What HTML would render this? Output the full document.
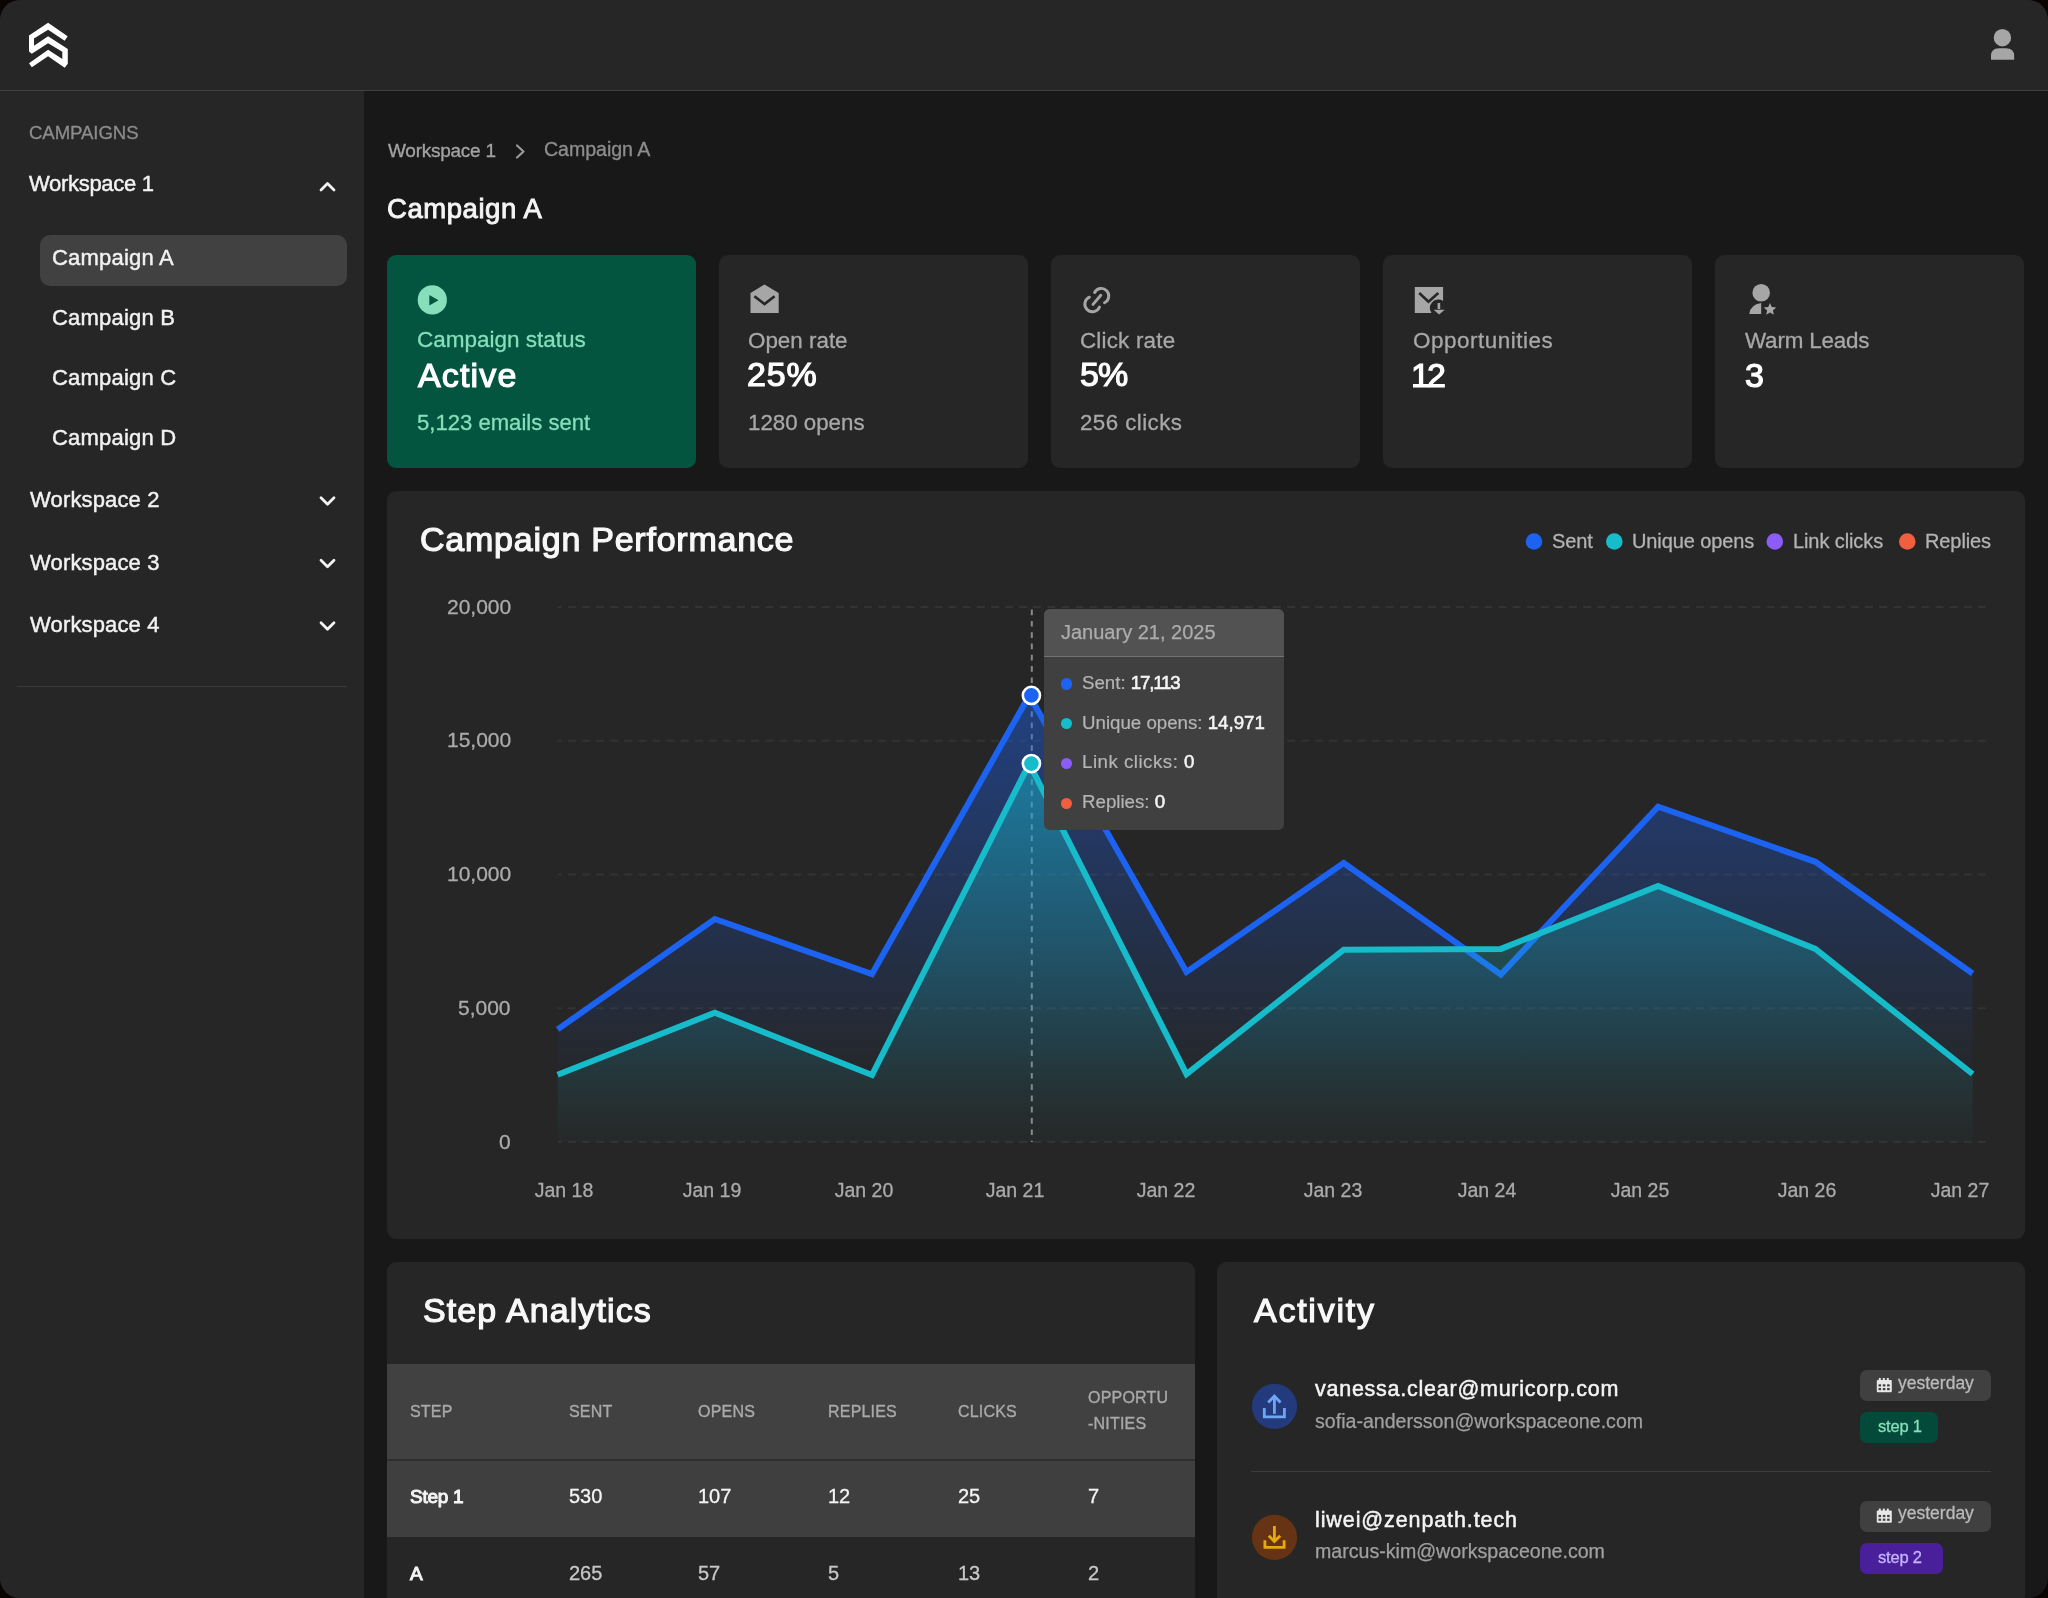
<!DOCTYPE html>
<html><head><meta charset="utf-8"><style>
html,body{margin:0;padding:0;background:#000;width:2048px;height:1598px;overflow:hidden}
body{position:relative;font-family:"Liberation Sans", sans-serif}
.t{position:absolute;white-space:nowrap;line-height:1;font-family:"Liberation Sans", sans-serif;will-change:transform}
.t b{font-weight:700}
svg{position:absolute;left:0;top:0}
</style></head><body>
<div style="position:absolute;left:0px;top:0px;width:2048px;height:1598px;background:#0a0403;border-radius:0px;"></div>
<div style="position:absolute;left:0;top:0;width:2048px;height:1598px;border-radius:20px;overflow:hidden;background:#181818">
<div style="position:absolute;left:0px;top:0px;width:2048px;height:90px;background:#262626;border-radius:0px;"></div>
<div style="position:absolute;left:0px;top:89.5px;width:2048px;height:1.6px;background:#404040;border-radius:0px;"></div>
<div style="position:absolute;left:0px;top:91px;width:364px;height:1507px;background:#262626;border-radius:0px;"></div>
</div>
<div class="t" style="left:29.30px;top:123.76px;font-size:18.6px;color:#8c8c8c;letter-spacing:-0.08px;-webkit-text-stroke:0.3px #8c8c8c;">CAMPAIGNS</div>
<div class="t" style="left:29.30px;top:173.38px;font-size:22px;color:#f2f2f2;letter-spacing:-0.3px;-webkit-text-stroke:0.45px #f2f2f2;">Workspace 1</div>
<div style="position:absolute;left:40px;top:234.5px;width:307px;height:51.5px;background:#414141;border-radius:10px;"></div>
<div class="t" style="left:52.00px;top:247.38px;font-size:22px;color:#f2f2f2;letter-spacing:0.2px;-webkit-text-stroke:0.45px #f2f2f2;">Campaign A</div>
<div class="t" style="left:52.00px;top:307.48px;font-size:22px;color:#f2f2f2;letter-spacing:0.2px;-webkit-text-stroke:0.45px #f2f2f2;">Campaign B</div>
<div class="t" style="left:52.00px;top:367.18px;font-size:22px;color:#f2f2f2;letter-spacing:0.2px;-webkit-text-stroke:0.45px #f2f2f2;">Campaign C</div>
<div class="t" style="left:52.00px;top:426.68px;font-size:22px;color:#f2f2f2;letter-spacing:0.2px;-webkit-text-stroke:0.45px #f2f2f2;">Campaign D</div>
<div class="t" style="left:29.50px;top:489.18px;font-size:22px;color:#f2f2f2;letter-spacing:0.15px;-webkit-text-stroke:0.45px #f2f2f2;">Workspace 2</div>
<div class="t" style="left:29.50px;top:551.58px;font-size:22px;color:#f2f2f2;letter-spacing:0.15px;-webkit-text-stroke:0.45px #f2f2f2;">Workspace 3</div>
<div class="t" style="left:29.50px;top:614.28px;font-size:22px;color:#f2f2f2;letter-spacing:0.15px;-webkit-text-stroke:0.45px #f2f2f2;">Workspace 4</div>
<div style="position:absolute;left:17px;top:685.5px;width:330px;height:1.5px;background:#3a3a3a;border-radius:0px;"></div>
<svg width="2048" height="1598" viewBox="0 0 2048 1598"><path d="M321 190 L327.5 183.5 L334 190" fill="none" stroke="#f2f2f2" stroke-width="2.8" stroke-linecap="round" stroke-linejoin="round"/><path d="M321 497.8 L327.5 504.3 L334 497.8" fill="none" stroke="#f2f2f2" stroke-width="2.8" stroke-linecap="round" stroke-linejoin="round"/><path d="M321 560.2 L327.5 566.7 L334 560.2" fill="none" stroke="#f2f2f2" stroke-width="2.8" stroke-linecap="round" stroke-linejoin="round"/><path d="M321 622.8 L327.5 629.3 L334 622.8" fill="none" stroke="#f2f2f2" stroke-width="2.8" stroke-linecap="round" stroke-linejoin="round"/><polygon points="29.01,35.49 48.09,22.82 67.65,36.27 64.68,40.65 48.09,29.70 34.01,38.46 34.01,45.66 48.09,36.27 67.80,49.10 67.80,63.80 64.68,67.87 48.09,56.30 31.82,67.25 29.01,63.18 48.09,49.72 62.33,58.95 62.33,51.76 48.09,43.15 31.82,53.64 29.01,51.60" fill="#ffffff"/><circle cx="2002.4" cy="37.7" r="8.7" fill="#a6a6a6"/><path d="M1991 59.8 L1991 56 Q1991 48.2 1999 48.2 L2006 48.2 Q2014.2 48.2 2014.2 56 L2014.2 59.8 Z" fill="#a6a6a6"/></svg>
<div class="t" style="left:387.60px;top:140.72px;font-size:19px;color:#a3a3a3;letter-spacing:-0.25px;-webkit-text-stroke:0.35px #a3a3a3;">Workspace 1</div>
<svg width="2048" height="1598" viewBox="0 0 2048 1598"><path d="M517 145.5 L523.5 151.5 L517 157.5" fill="none" stroke="#9a9a9a" stroke-width="2.2" stroke-linecap="round" stroke-linejoin="round"/></svg>
<div class="t" style="left:544.30px;top:140.21px;font-size:19.6px;color:#8c8c8c;letter-spacing:-0.05px;-webkit-text-stroke:0.35px #8c8c8c;">Campaign A</div>
<div class="t" style="left:386.50px;top:194.62px;font-size:27.5px;color:#f5f5f5;letter-spacing:0.55px;-webkit-text-stroke:0.9px #f5f5f5;">Campaign A</div>
<div style="position:absolute;left:387px;top:255px;width:309px;height:213px;background:#03553f;border-radius:9px;"></div>
<div style="position:absolute;left:719px;top:255px;width:309px;height:213px;background:#262626;border-radius:9px;"></div>
<div style="position:absolute;left:1051px;top:255px;width:309px;height:213px;background:#262626;border-radius:9px;"></div>
<div style="position:absolute;left:1383px;top:255px;width:309px;height:213px;background:#262626;border-radius:9px;"></div>
<div style="position:absolute;left:1715px;top:255px;width:309px;height:213px;background:#262626;border-radius:9px;"></div>
<svg width="2048" height="1598" viewBox="0 0 2048 1598"><circle cx="432.3" cy="299.9" r="14.6" fill="#86dfba"/><path d="M429.3 295 L438.5 300.2 L429.3 305.4 Z" fill="#03553f"/></svg>
<div class="t" style="left:416.60px;top:329.25px;font-size:22.5px;color:#86dfba;letter-spacing:0px;-webkit-text-stroke:0.3px #86dfba;">Campaign status</div>
<div class="t" style="left:417.60px;top:357.82px;font-size:34px;color:#ffffff;letter-spacing:1.14px;-webkit-text-stroke:1.2px #ffffff;">Active</div>
<div class="t" style="left:417.00px;top:412.09px;font-size:22.1px;color:#86dfba;letter-spacing:0px;-webkit-text-stroke:0.3px #86dfba;">5,123 emails sent</div>
<svg width="2048" height="1598" viewBox="0 0 2048 1598"><path d="M764.5 284.5 L750.5 293 L750.5 313.1 L778.7 313.1 L778.7 293 Z" fill="#a6a6a6"/><path d="M754.4 296.2 L764.5 304.1 L774.6 296.2" fill="none" stroke="#262626" stroke-width="2.6"/></svg>
<div class="t" style="left:748.10px;top:329.64px;font-size:22.4px;color:#a8a8a8;letter-spacing:0px;-webkit-text-stroke:0.3px #a8a8a8;">Open rate</div>
<div class="t" style="left:746.60px;top:357.22px;font-size:34px;color:#ffffff;letter-spacing:0.8px;-webkit-text-stroke:1.2px #ffffff;">25%</div>
<div class="t" style="left:748.00px;top:412.02px;font-size:22.3px;color:#a8a8a8;letter-spacing:0px;-webkit-text-stroke:0.3px #a8a8a8;">1280 opens</div>
<svg width="2048" height="1598" viewBox="0 0 2048 1598"><g fill="none" stroke="#a6a6a6" stroke-width="2.9" stroke-linecap="round"><path d="M1094.6 292.5 A7.5 7.5 0 1 1 1104.5 302.7"/><path d="M1089.4 297.2 A7.6 7.6 0 1 0 1099.5 307.0"/><path d="M1093 304.4 L1100.8 295.3"/></g></svg>
<div class="t" style="left:1080.10px;top:329.64px;font-size:22.4px;color:#a8a8a8;letter-spacing:0.2px;-webkit-text-stroke:0.3px #a8a8a8;">Click rate</div>
<div class="t" style="left:1079.60px;top:357.22px;font-size:34px;color:#ffffff;letter-spacing:-1px;-webkit-text-stroke:1.2px #ffffff;">5%</div>
<div class="t" style="left:1080.00px;top:412.02px;font-size:22.3px;color:#a8a8a8;letter-spacing:0.45px;-webkit-text-stroke:0.3px #a8a8a8;">256 clicks</div>
<svg width="2048" height="1598" viewBox="0 0 2048 1598"><path d="M1414.8 287 L1443.1 287 L1443.1 301 A8.5 8.5 0 0 0 1431.5 313.1 L1414.8 313.1 Z" fill="#a6a6a6"/><path d="M1419.2 293 L1428.5 301.8 L1438.3 293" fill="none" stroke="#262626" stroke-width="2.6"/><path d="M1438.9 303 L1438.9 309" stroke="#a6a6a6" stroke-width="2.6"/><path d="M1433.6 309.7 L1444.7 309.7 L1439.1 314.4 Z" fill="#a6a6a6"/></svg>
<div class="t" style="left:1412.60px;top:329.64px;font-size:22.4px;color:#a8a8a8;letter-spacing:0.55px;-webkit-text-stroke:0.3px #a8a8a8;">Opportunities</div>
<div class="t" style="left:1410.80px;top:358.02px;font-size:34px;color:#ffffff;letter-spacing:-3px;-webkit-text-stroke:1.2px #ffffff;">12</div>
<svg width="2048" height="1598" viewBox="0 0 2048 1598"><circle cx="1761.2" cy="292.8" r="8.8" fill="#a6a6a6"/><path d="M1749.3 313.9 Q1750.5 304.5 1761.2 303.1 L1761.2 313.9 Z" fill="#a6a6a6"/><polygon points="1770.00,302.90 1771.76,307.07 1776.28,307.46 1772.85,310.43 1773.88,314.84 1770.00,312.50 1766.12,314.84 1767.15,310.43 1763.72,307.46 1768.24,307.07" fill="#a6a6a6"/></svg>
<div class="t" style="left:1744.60px;top:329.64px;font-size:22.4px;color:#a8a8a8;letter-spacing:-0.18px;-webkit-text-stroke:0.3px #a8a8a8;">Warm Leads</div>
<div class="t" style="left:1745.20px;top:358.02px;font-size:34px;color:#ffffff;letter-spacing:0px;-webkit-text-stroke:1.2px #ffffff;">3</div>
<div style="position:absolute;left:387px;top:491px;width:1638px;height:748px;background:#262626;border-radius:9px;"></div>
<div class="t" style="left:420.40px;top:522.32px;font-size:34px;color:#f8f8f8;letter-spacing:0.76px;-webkit-text-stroke:1.2px #f8f8f8;">Campaign Performance</div>
<svg width="2048" height="1598" viewBox="0 0 2048 1598"><circle cx="1534" cy="541.5" r="8.3" fill="#1d63f2"/></svg>
<div class="t" style="left:1552.00px;top:530.67px;font-size:20px;color:#b3b3b3;letter-spacing:-0.1px;-webkit-text-stroke:0.3px #b3b3b3;">Sent</div>
<svg width="2048" height="1598" viewBox="0 0 2048 1598"><circle cx="1614.3" cy="541.5" r="8.3" fill="#17bccb"/></svg>
<div class="t" style="left:1632.00px;top:530.67px;font-size:20px;color:#b3b3b3;letter-spacing:-0.1px;-webkit-text-stroke:0.3px #b3b3b3;">Unique opens</div>
<svg width="2048" height="1598" viewBox="0 0 2048 1598"><circle cx="1774.8" cy="541.5" r="8.3" fill="#8b5cf6"/></svg>
<div class="t" style="left:1792.50px;top:530.67px;font-size:20px;color:#b3b3b3;letter-spacing:-0.1px;-webkit-text-stroke:0.3px #b3b3b3;">Link clicks</div>
<svg width="2048" height="1598" viewBox="0 0 2048 1598"><circle cx="1907.3" cy="541.5" r="8.3" fill="#f0603f"/></svg>
<div class="t" style="left:1925.00px;top:530.67px;font-size:20px;color:#b3b3b3;letter-spacing:-0.1px;-webkit-text-stroke:0.3px #b3b3b3;">Replies</div>
<svg width="2048" height="1598" viewBox="0 0 2048 1598"><line x1="557.6" y1="1142.0" x2="1991" y2="1142.0" stroke="#333333" stroke-width="2" stroke-dasharray="7.8 6.3" stroke-dashoffset="3.7"/></svg>
<div class="t" style="right:1537.20px;text-align:right;top:1130.52px;font-size:21px;color:#ababab;letter-spacing:0px;-webkit-text-stroke:0.3px #ababab;">0</div>
<svg width="2048" height="1598" viewBox="0 0 2048 1598"><line x1="557.6" y1="1008.2" x2="1991" y2="1008.2" stroke="#333333" stroke-width="2" stroke-dasharray="7.8 6.3" stroke-dashoffset="3.7"/></svg>
<div class="t" style="right:1537.20px;text-align:right;top:996.77px;font-size:21px;color:#ababab;letter-spacing:0px;-webkit-text-stroke:0.3px #ababab;">5,000</div>
<svg width="2048" height="1598" viewBox="0 0 2048 1598"><line x1="557.6" y1="874.5" x2="1991" y2="874.5" stroke="#333333" stroke-width="2" stroke-dasharray="7.8 6.3" stroke-dashoffset="3.7"/></svg>
<div class="t" style="right:1537.20px;text-align:right;top:863.02px;font-size:21px;color:#ababab;letter-spacing:0px;-webkit-text-stroke:0.3px #ababab;">10,000</div>
<svg width="2048" height="1598" viewBox="0 0 2048 1598"><line x1="557.6" y1="740.8" x2="1991" y2="740.8" stroke="#333333" stroke-width="2" stroke-dasharray="7.8 6.3" stroke-dashoffset="3.7"/></svg>
<div class="t" style="right:1537.20px;text-align:right;top:729.27px;font-size:21px;color:#ababab;letter-spacing:0px;-webkit-text-stroke:0.3px #ababab;">15,000</div>
<svg width="2048" height="1598" viewBox="0 0 2048 1598"><line x1="557.6" y1="607.0" x2="1991" y2="607.0" stroke="#333333" stroke-width="2" stroke-dasharray="7.8 6.3" stroke-dashoffset="3.7"/></svg>
<div class="t" style="right:1537.20px;text-align:right;top:595.52px;font-size:21px;color:#ababab;letter-spacing:0px;-webkit-text-stroke:0.3px #ababab;">20,000</div>
<div class="t" style="left:263.50px;width:600px;text-align:center;top:1181.49px;font-size:19.5px;color:#ababab;letter-spacing:0px;-webkit-text-stroke:0.3px #ababab;">Jan 18</div>
<div class="t" style="left:412.00px;width:600px;text-align:center;top:1181.49px;font-size:19.5px;color:#ababab;letter-spacing:0px;-webkit-text-stroke:0.3px #ababab;">Jan 19</div>
<div class="t" style="left:563.50px;width:600px;text-align:center;top:1181.49px;font-size:19.5px;color:#ababab;letter-spacing:0px;-webkit-text-stroke:0.3px #ababab;">Jan 20</div>
<div class="t" style="left:715.00px;width:600px;text-align:center;top:1181.49px;font-size:19.5px;color:#ababab;letter-spacing:0px;-webkit-text-stroke:0.3px #ababab;">Jan 21</div>
<div class="t" style="left:866.00px;width:600px;text-align:center;top:1181.49px;font-size:19.5px;color:#ababab;letter-spacing:0px;-webkit-text-stroke:0.3px #ababab;">Jan 22</div>
<div class="t" style="left:1033.00px;width:600px;text-align:center;top:1181.49px;font-size:19.5px;color:#ababab;letter-spacing:0px;-webkit-text-stroke:0.3px #ababab;">Jan 23</div>
<div class="t" style="left:1187.00px;width:600px;text-align:center;top:1181.49px;font-size:19.5px;color:#ababab;letter-spacing:0px;-webkit-text-stroke:0.3px #ababab;">Jan 24</div>
<div class="t" style="left:1340.00px;width:600px;text-align:center;top:1181.49px;font-size:19.5px;color:#ababab;letter-spacing:0px;-webkit-text-stroke:0.3px #ababab;">Jan 25</div>
<div class="t" style="left:1507.00px;width:600px;text-align:center;top:1181.49px;font-size:19.5px;color:#ababab;letter-spacing:0px;-webkit-text-stroke:0.3px #ababab;">Jan 26</div>
<div class="t" style="left:1660.00px;width:600px;text-align:center;top:1181.49px;font-size:19.5px;color:#ababab;letter-spacing:0px;-webkit-text-stroke:0.3px #ababab;">Jan 27</div>
<svg width="2048" height="1598" viewBox="0 0 2048 1598"><defs><linearGradient id="gs" x1="0" y1="695" x2="0" y2="1095" gradientUnits="userSpaceOnUse"><stop offset="0" stop-color="#1d63f2" stop-opacity="0.45"/><stop offset="1" stop-color="#1d63f2" stop-opacity="0"/></linearGradient><linearGradient id="go" x1="0" y1="764" x2="0" y2="1160" gradientUnits="userSpaceOnUse"><stop offset="0" stop-color="#17bccb" stop-opacity="0.48"/><stop offset="1" stop-color="#17bccb" stop-opacity="0"/></linearGradient></defs><line x1="1031.8" y1="607" x2="1031.8" y2="1142" stroke="#8a8a8a" stroke-width="2" stroke-dasharray="5.7 5.6" stroke-dashoffset="-2.6"/><polygon points="557.6,1142 557.6,1029.4 714.8,919.0 872.0,974.0 1029.3,695.4 1186.5,972.0 1343.7,863.0 1500.9,974.5 1658.1,806.7 1815.4,861.8 1972.6,973.5 1972.6,1142" fill="url(#gs)"/><polyline points="557.6,1029.4 714.8,919.0 872.0,974.0 1029.3,695.4 1186.5,972.0 1343.7,863.0 1500.9,974.5 1658.1,806.7 1815.4,861.8 1972.6,973.5" fill="none" stroke="#1d63f2" stroke-width="6" stroke-linejoin="miter"/><polygon points="557.6,1142 557.6,1074.8 714.8,1012.7 872.0,1075.0 1029.3,763.6 1186.5,1074.2 1343.7,949.7 1500.9,948.9 1658.1,886.0 1815.4,948.9 1972.6,1074.0 1972.6,1142" fill="url(#go)"/><polyline points="557.6,1074.8 714.8,1012.7 872.0,1075.0 1029.3,763.6 1186.5,1074.2 1343.7,949.7 1500.9,948.9 1658.1,886.0 1815.4,948.9 1972.6,1074.0" fill="none" stroke="#17bccb" stroke-width="6" stroke-linejoin="miter"/><circle cx="1031.4" cy="695.4" r="8.6" fill="#1d63f2" stroke="#fff" stroke-width="2.6"/><circle cx="1031.4" cy="763.6" r="8.6" fill="#17bccb" stroke="#fff" stroke-width="2.6"/></svg>
<div style="position:absolute;left:1044.3px;top:608.7px;width:239.6px;height:221.3px;background:#404040;border-radius:6px;"></div>
<div style="position:absolute;left:1044.3px;top:608.7px;width:239.6px;height:47.7px;background:#525252;border-radius:6px 6px 0 0px;"></div>
<div style="position:absolute;left:1044.3px;top:655.6px;width:239.6px;height:1.6px;background:#727272;border-radius:0px;"></div>
<div class="t" style="left:1061.30px;top:621.57px;font-size:20px;color:#acacac;letter-spacing:0px;-webkit-text-stroke:0.25px #acacac;">January 21, 2025</div>
<div style="position:absolute;left:1061.3px;top:678.4px;width:11.2px;height:11.2px;background:#1d63f2;border-radius:6px;"></div>
<div class="t" style="left:1081.70px;top:673.77px;font-size:18.7px;color:#b4b4b4;letter-spacing:0px;-webkit-text-stroke:0.2px #b4b4b4;">Sent: <span style="color:#f4f4f4;-webkit-text-stroke:0.55px #f4f4f4;letter-spacing:-1.2px">17,113</span></div>
<div style="position:absolute;left:1061.3px;top:718.1999999999999px;width:11.2px;height:11.2px;background:#17bccb;border-radius:6px;"></div>
<div class="t" style="left:1081.70px;top:713.57px;font-size:18.7px;color:#b4b4b4;letter-spacing:0px;-webkit-text-stroke:0.2px #b4b4b4;">Unique opens: <span style="color:#f4f4f4;-webkit-text-stroke:0.55px #f4f4f4;letter-spacing:0px">14,971</span></div>
<div style="position:absolute;left:1061.3px;top:758.0px;width:11.2px;height:11.2px;background:#8b5cf6;border-radius:6px;"></div>
<div class="t" style="left:1081.70px;top:753.37px;font-size:18.7px;color:#b4b4b4;letter-spacing:0.5px;-webkit-text-stroke:0.2px #b4b4b4;">Link clicks: <span style="color:#f4f4f4;-webkit-text-stroke:0.55px #f4f4f4;letter-spacing:0px">0</span></div>
<div style="position:absolute;left:1061.3px;top:797.8px;width:11.2px;height:11.2px;background:#f0603f;border-radius:6px;"></div>
<div class="t" style="left:1081.70px;top:793.17px;font-size:18.7px;color:#b4b4b4;letter-spacing:0px;-webkit-text-stroke:0.2px #b4b4b4;">Replies: <span style="color:#f4f4f4;-webkit-text-stroke:0.55px #f4f4f4;letter-spacing:0px">0</span></div>
<div style="position:absolute;left:387px;top:1261.5px;width:808px;height:400px;background:#262626;border-radius:9px;"></div>
<div class="t" style="left:423.10px;top:1292.72px;font-size:34px;color:#f8f8f8;letter-spacing:1.09px;-webkit-text-stroke:1.2px #f8f8f8;">Step Analytics</div>
<div style="position:absolute;left:387px;top:1364px;width:808px;height:96px;background:#414141;border-radius:0px;"></div>
<div style="position:absolute;left:387px;top:1459px;width:808px;height:2px;background:#2e2e2e;border-radius:0px;"></div>
<div style="position:absolute;left:387px;top:1461px;width:808px;height:76px;background:#3f3f3f;border-radius:0px;"></div>
<div class="t" style="left:410.00px;top:1403.56px;font-size:16px;color:#a9a9a9;letter-spacing:0.2px;-webkit-text-stroke:0.35px #a9a9a9;">STEP</div>
<div class="t" style="left:568.50px;top:1403.56px;font-size:16px;color:#a9a9a9;letter-spacing:0.2px;-webkit-text-stroke:0.35px #a9a9a9;">SENT</div>
<div class="t" style="left:697.60px;top:1403.56px;font-size:16px;color:#a9a9a9;letter-spacing:0.2px;-webkit-text-stroke:0.35px #a9a9a9;">OPENS</div>
<div class="t" style="left:828.30px;top:1403.56px;font-size:16px;color:#a9a9a9;letter-spacing:0.2px;-webkit-text-stroke:0.35px #a9a9a9;">REPLIES</div>
<div class="t" style="left:958.00px;top:1403.56px;font-size:16px;color:#a9a9a9;letter-spacing:0.2px;-webkit-text-stroke:0.35px #a9a9a9;">CLICKS</div>
<div class="t" style="left:1088.00px;top:1390.46px;font-size:16px;color:#a9a9a9;letter-spacing:0.2px;-webkit-text-stroke:0.35px #a9a9a9;">OPPORTU</div>
<div class="t" style="left:1088.00px;top:1416.16px;font-size:16px;color:#a9a9a9;letter-spacing:0.2px;-webkit-text-stroke:0.35px #a9a9a9;">-NITIES</div>
<div class="t" style="left:410.00px;top:1487.32px;font-size:19px;color:#f4f4f4;letter-spacing:-0.25px;-webkit-text-stroke:1.0px #f4f4f4;">Step 1</div>
<div class="t" style="left:568.50px;top:1486.47px;font-size:20px;color:#f4f4f4;letter-spacing:0px;-webkit-text-stroke:0.3px #f4f4f4;">530</div>
<div class="t" style="left:697.60px;top:1486.47px;font-size:20px;color:#f4f4f4;letter-spacing:0px;-webkit-text-stroke:0.3px #f4f4f4;">107</div>
<div class="t" style="left:828.30px;top:1486.47px;font-size:20px;color:#f4f4f4;letter-spacing:0px;-webkit-text-stroke:0.3px #f4f4f4;">12</div>
<div class="t" style="left:958.00px;top:1486.47px;font-size:20px;color:#f4f4f4;letter-spacing:0px;-webkit-text-stroke:0.3px #f4f4f4;">25</div>
<div class="t" style="left:1088.00px;top:1486.47px;font-size:20px;color:#f4f4f4;letter-spacing:0px;-webkit-text-stroke:0.3px #f4f4f4;">7</div>
<div class="t" style="left:410.00px;top:1563.92px;font-size:19px;color:#f4f4f4;letter-spacing:0px;-webkit-text-stroke:1.0px #f4f4f4;">A</div>
<div class="t" style="left:568.50px;top:1563.07px;font-size:20px;color:#c8c8c8;letter-spacing:0px;-webkit-text-stroke:0.3px #c8c8c8;">265</div>
<div class="t" style="left:697.60px;top:1563.07px;font-size:20px;color:#c8c8c8;letter-spacing:0px;-webkit-text-stroke:0.3px #c8c8c8;">57</div>
<div class="t" style="left:828.30px;top:1563.07px;font-size:20px;color:#c8c8c8;letter-spacing:0px;-webkit-text-stroke:0.3px #c8c8c8;">5</div>
<div class="t" style="left:958.00px;top:1563.07px;font-size:20px;color:#c8c8c8;letter-spacing:0px;-webkit-text-stroke:0.3px #c8c8c8;">13</div>
<div class="t" style="left:1088.00px;top:1563.07px;font-size:20px;color:#c8c8c8;letter-spacing:0px;-webkit-text-stroke:0.3px #c8c8c8;">2</div>
<div style="position:absolute;left:1217px;top:1261.5px;width:808px;height:400px;background:#262626;border-radius:9px;"></div>
<div class="t" style="left:1253.60px;top:1292.52px;font-size:34px;color:#f8f8f8;letter-spacing:1.75px;-webkit-text-stroke:1.2px #f8f8f8;">Activity</div>
<svg width="2048" height="1598" viewBox="0 0 2048 1598"><circle cx="1274.5" cy="1406.4" r="22.6" fill="#233a7c"/><g fill="none" stroke="#6ea6f7" stroke-width="2.8"><path d="M1264.3 1408 L1264.3 1416.8 L1284.4 1416.8 L1284.4 1408"/><path d="M1274.4 1413.8 L1274.4 1396"/><path d="M1268.2 1402.5 L1274.4 1396 L1280.5 1402.5"/></g></svg>
<div class="t" style="left:1314.80px;top:1378.80px;font-size:21.5px;color:#f4f4f4;letter-spacing:0.75px;-webkit-text-stroke:0.5px #f4f4f4;">vanessa.clear@muricorp.com</div>
<div class="t" style="left:1314.80px;top:1411.61px;font-size:19.6px;color:#a0a0a0;letter-spacing:0px;-webkit-text-stroke:0.25px #a0a0a0;">sofia-andersson@workspaceone.com</div>
<div style="position:absolute;left:1860.2px;top:1370px;width:130.7px;height:31px;background:#404040;border-radius:7px;"></div>
<div class="t" style="left:1897.80px;top:1374.79px;font-size:17.5px;color:#bababa;letter-spacing:0px;-webkit-text-stroke:0.3px #bababa;">yesterday</div>
<div style="position:absolute;left:1860.2px;top:1412px;width:78px;height:31.4px;background:#044a3a;border-radius:7px;"></div>
<div class="t" style="left:1877.60px;top:1418.03px;font-size:16.5px;color:#86dfba;letter-spacing:-0.2px;-webkit-text-stroke:0.3px #86dfba;">step 1</div>
<div style="position:absolute;left:1251px;top:1470.5px;width:740px;height:1.5px;background:#3c3c3c;border-radius:0px;"></div>
<svg width="2048" height="1598" viewBox="0 0 2048 1598"><circle cx="1274.5" cy="1537.4" r="22.6" fill="#663414"/><g fill="none" stroke="#e8a90c" stroke-width="2.8"><path d="M1264.9 1540.3 L1264.9 1547.4 L1284.1 1547.4 L1284.1 1540.3"/><path d="M1274.4 1526 L1274.4 1541"/><path d="M1268.8 1535.7 L1274.4 1541.6 L1280.2 1535.7"/></g></svg>
<div class="t" style="left:1314.80px;top:1510.00px;font-size:21.5px;color:#f4f4f4;letter-spacing:0.9px;-webkit-text-stroke:0.5px #f4f4f4;">liwei@zenpath.tech</div>
<div class="t" style="left:1314.80px;top:1542.41px;font-size:19.6px;color:#a0a0a0;letter-spacing:0px;-webkit-text-stroke:0.25px #a0a0a0;">marcus-kim@workspaceone.com</div>
<div style="position:absolute;left:1860.2px;top:1500.5px;width:130.7px;height:31px;background:#404040;border-radius:7px;"></div>
<div class="t" style="left:1897.80px;top:1505.29px;font-size:17.5px;color:#bababa;letter-spacing:0px;-webkit-text-stroke:0.3px #bababa;">yesterday</div>
<div style="position:absolute;left:1860.2px;top:1543.2px;width:82.6px;height:31px;background:#4a1f9c;border-radius:7px;"></div>
<div class="t" style="left:1877.60px;top:1549.03px;font-size:16.5px;color:#c4b5fd;letter-spacing:-0.2px;-webkit-text-stroke:0.3px #c4b5fd;">step 2</div>
<svg width="2048" height="1598" viewBox="0 0 2048 1598"><g fill="#e8e8e8"><rect x="1876.8" y="1380" width="15" height="12.2" rx="1"/></g><g fill="#404040"><rect x="1878.5" y="1384.3" width="2.6" height="2.2"/><rect x="1882.8" y="1384.3" width="2.6" height="2.2"/><rect x="1887.1" y="1384.3" width="2.6" height="2.2"/><rect x="1878.5" y="1388" width="2.6" height="2.2"/><rect x="1882.8" y="1388" width="2.6" height="2.2"/><rect x="1887.1" y="1388" width="2.6" height="2.2"/></g><g fill="#e8e8e8"><rect x="1878.8" y="1378" width="2" height="3"/><rect x="1882.8" y="1378" width="2" height="3"/><rect x="1886.8" y="1378" width="2" height="3"/></g><g fill="#e8e8e8"><rect x="1876.8" y="1510.6" width="15" height="12.2" rx="1"/></g><g fill="#404040"><rect x="1878.5" y="1514.8999999999999" width="2.6" height="2.2"/><rect x="1882.8" y="1514.8999999999999" width="2.6" height="2.2"/><rect x="1887.1" y="1514.8999999999999" width="2.6" height="2.2"/><rect x="1878.5" y="1518.6" width="2.6" height="2.2"/><rect x="1882.8" y="1518.6" width="2.6" height="2.2"/><rect x="1887.1" y="1518.6" width="2.6" height="2.2"/></g><g fill="#e8e8e8"><rect x="1878.8" y="1508.6" width="2" height="3"/><rect x="1882.8" y="1508.6" width="2" height="3"/><rect x="1886.8" y="1508.6" width="2" height="3"/></g></svg>
</body></html>
